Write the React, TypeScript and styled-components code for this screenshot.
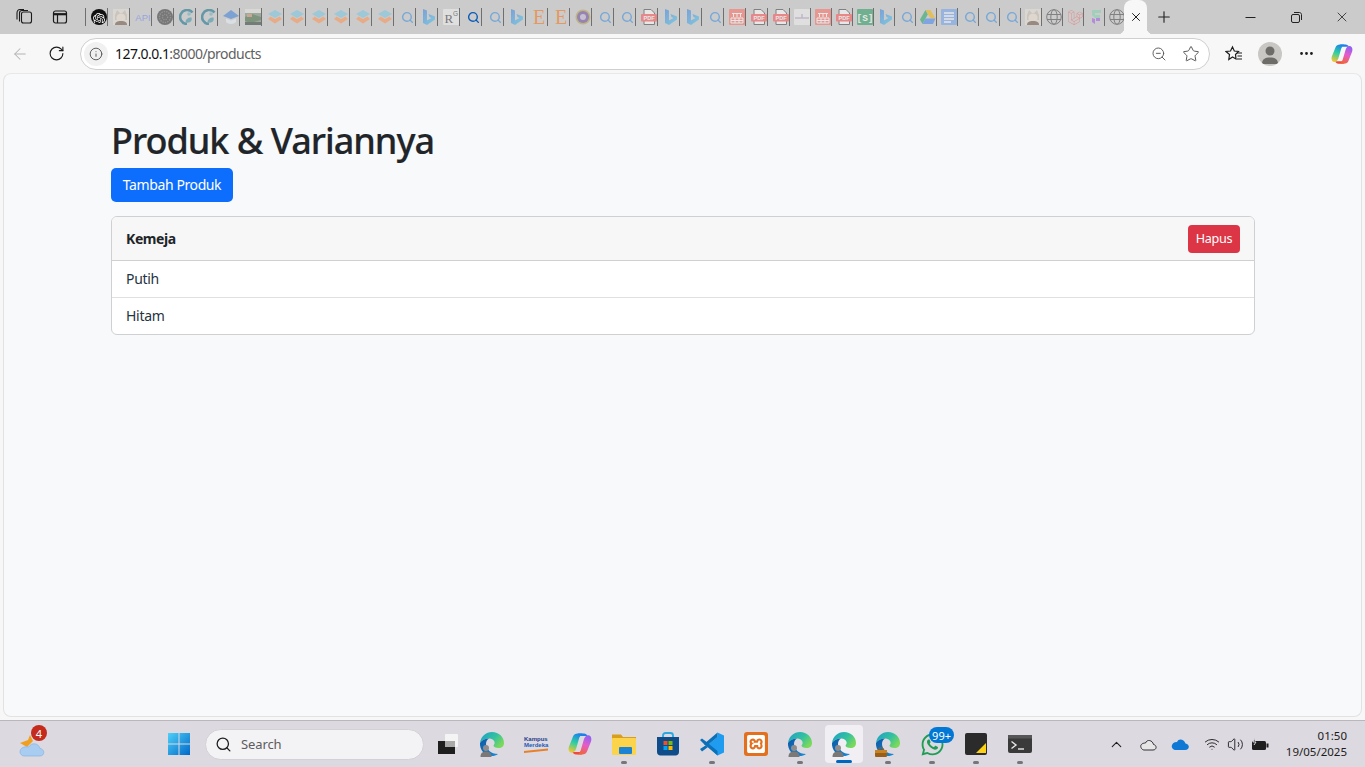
import React from 'react';
import styled, { createGlobalStyle } from 'styled-components';
import { ArrowLeft, ChevronUp, Info, MoreHorizontal, Plus, RotateCw, Search, Star, Volume2, Wifi, X, ZoomOut } from 'lucide-react';
import { SiLaravel, SiOpenai, SiXampp } from 'react-icons/si';
import { FaWhatsapp } from 'react-icons/fa';

const uiFont = '"Noto Sans", "Open Sans", "Liberation Sans", sans-serif';

const GlobalStyle = createGlobalStyle`
  html, body {
    margin: 0;
    padding: 0;
    height: 100%;
    overflow: hidden;
    font-family: ${uiFont};
  }
  * {
    box-sizing: border-box;
  }
`;

const Screen = styled.div`
  width: 1365px;
  height: 767px;
  display: flex;
  flex-direction: column;
  background: #f7f7f7;
`;

// Browser tab strip
const TabStrip = styled.div`
  height: 34px;
  flex: none;
  display: flex;
  align-items: center;
  background: #cbcbcb;
  padding-left: 6px;
`;

const StripButton = styled.div`
  width: 36px;
  height: 32px;
  flex: none;
  display: flex;
  align-items: center;
  justify-content: center;
  color: #1b1b1b;
`;

const TabGroup = styled.div`
  display: flex;
  align-items: center;
  margin-left: 7px;
  width: 1039px;
  flex: none;
`;

const TabCell = styled.div<{ $wide: boolean }>`
  width: ${p => (p.$wide ? 22 : 21)}px;
  height: 18px;
  flex: none;
  display: flex;
  align-items: center;
  justify-content: flex-end;
  border-left: 1px solid #6f6f6f;
`;

const IconFace = styled.div<{ $pale: boolean }>`
  width: 16px;
  height: 16px;
  display: flex;
  align-items: center;
  justify-content: center;
  opacity: ${p => (p.$pale ? 0.55 : 1)};
  line-height: 1;
`;

const SerifLetter = styled.span`
  font-family: "Liberation Serif", serif;
  font-size: 20px;
  line-height: 16px;
  color: #fa720c;
`;

const ActiveTab = styled.div`
  position: relative;
  width: 23px;
  height: 34px;
  flex: none;
  display: flex;
  align-items: center;
  justify-content: center;
  background: #f7f7f7;
  border-radius: 8px 8px 0 0;
  color: #111;
  &::before,
  &::after {
    content: '';
    position: absolute;
    bottom: 0;
    width: 6px;
    height: 6px;
  }
  &::before {
    left: -6px;
    background: radial-gradient(circle at 0 0, #cbcbcb 6px, #f7f7f7 6.5px);
  }
  &::after {
    right: -6px;
    background: radial-gradient(circle at 100% 0, #cbcbcb 6px, #f7f7f7 6.5px);
  }
`;

const NewTab = styled.div`
  width: 34px;
  flex: none;
  display: flex;
  justify-content: center;
  color: #222;
`;

const WindowControls = styled.div`
  margin-left: auto;
  display: flex;
  align-items: center;
  color: #222;
`;

const WindowButton = styled.div`
  width: 46px;
  height: 32px;
  display: flex;
  align-items: center;
  justify-content: center;
`;

// Address bar row
const Toolbar = styled.div`
  height: 39px;
  flex: none;
  display: flex;
  align-items: center;
  padding: 0 2px;
  background: #f7f7f7;
`;

const ToolButton = styled.div<{ $faded?: boolean }>`
  width: 36px;
  height: 32px;
  flex: none;
  display: flex;
  align-items: center;
  justify-content: center;
  color: ${p => (p.$faded ? '#b4b4b4' : '#1c1c1c')};
`;

const AddressBar = styled.div`
  width: 1130px;
  height: 32px;
  margin: 0 6px;
  flex: none;
  display: flex;
  align-items: center;
  background: #fff;
  border: 1px solid #cfcfcf;
  border-radius: 16px;
  padding-left: 3px;
  padding-right: 7px;
`;

const InfoChip = styled.div`
  width: 24px;
  height: 24px;
  flex: none;
  border-radius: 50%;
  background: #f1f1f1;
  display: flex;
  align-items: center;
  justify-content: center;
  color: #555;
`;

const UrlText = styled.div`
  margin-left: 7px;
  font-size: 14px;
  letter-spacing: -0.55px;
  color: #5f5f5f;
  b {
    font-weight: 400;
    color: #111;
  }
`;

const AddressActions = styled.div`
  margin-left: auto;
  display: flex;
  align-items: center;
  gap: 9px;
  color: #555;
`;

const AddressAction = styled.div`
  width: 23px;
  display: flex;
  justify-content: center;
`;

const ProfileIcon = styled.div`
  width: 24px;
  height: 24px;
  border-radius: 50%;
  background: #c9c7c4;
  overflow: hidden;
`;

// The page itself
const PageFrame = styled.div`
  height: 644px;
  flex: none;
  margin: 0 3px 0 3px;
  background: #f8f9fa;
  border: 1px solid #e2e2e2;
  border-top-color: #e8e8e8;
  border-radius: 8px;
  padding: 44px 106px 0 107px;
`;

const Title = styled.h1`
  margin: 0;
  height: 50px;
  font-size: 36px;
  line-height: 45px;
  font-weight: 500;
  color: #212529;
  letter-spacing: -1px;
  -webkit-text-stroke: 0.2px #212529;
`;

const PrimaryButton = styled.div`
  width: 122px;
  height: 34px;
  padding-bottom: 2px;
  display: flex;
  align-items: center;
  justify-content: center;
  background: #0d6efd;
  color: #fff;
  font-size: 14px;
  letter-spacing: -0.4px;
  border-radius: 5px;
`;

const Card = styled.div`
  margin-top: 14px;
  background: #fff;
  border: 1px solid #cfd0d1;
  border-radius: 6px;
  overflow: hidden;
`;

const CardHeader = styled.div`
  height: 44px;
  display: flex;
  align-items: center;
  justify-content: space-between;
  padding: 0 14px;
  background: #f7f7f7;
  border-bottom: 1px solid #cfd0d1;
  font-size: 14px;
  font-weight: 700;
  letter-spacing: -0.4px;
  color: #212529;
`;

const DangerButton = styled.div`
  width: 52px;
  height: 28px;
  padding-bottom: 1px;
  display: flex;
  align-items: center;
  justify-content: center;
  background: #dc3545;
  color: #fff;
  font-size: 12.6px;
  font-weight: 400;
  letter-spacing: -0.25px;
  border-radius: 4px;
`;

const VariantRow = styled.div<{ $last?: boolean }>`
  height: ${p => (p.$last ? 36 : 37)}px;
  padding: 0 14px 2px;
  display: flex;
  align-items: center;
  font-size: 14px;
  letter-spacing: -0.3px;
  color: #263340;
  border-bottom: ${p => (p.$last ? 'none' : '1px solid #dfe0e1')};
`;

// Windows taskbar
const Taskbar = styled.div`
  margin-top: 3px;
  height: 47px;
  flex: none;
  display: flex;
  align-items: center;
  background: #dcd9e0;
  border-top: 1px solid #b9b7bb;
`;

const WeatherSlot = styled.div`
  width: 157px;
  flex: none;
  padding-left: 19px;
  display: flex;
  align-items: center;
`;

const WeatherIcon = styled.div`
  position: relative;
  width: 26px;
  height: 26px;
`;

const Badge = styled.span<{ $tone: string; $top: number; $right: number }>`
  position: absolute;
  display: flex;
  align-items: center;
  justify-content: center;
  color: #fff;
  background: ${p => p.$tone};
  font-size: 11px;
  line-height: 1;
  border-radius: 8px;
  height: 16px;
  min-width: 16px;
  padding: 0 3px;
  top: ${p => p.$top}px;
  right: ${p => p.$right}px;
`;

const TaskSlot = styled.div<{ $active?: boolean }>`
  position: relative;
  height: ${p => (p.$active ? '38px' : '40px')};
  flex: none;
  display: flex;
  align-items: center;
  justify-content: center;
  border-radius: 4px;
  background: ${p => (p.$active ? '#f1eff3' : 'transparent')};
  width: ${p => (p.$active ? '38px' : '44px')};
  margin: ${p => (p.$active ? '0 3px' : '0')};
`;

const RunDot = styled.span<{ $active?: boolean }>`
  position: absolute;
  bottom: 0;
  left: 50%;
  transform: translateX(-50%);
  width: ${p => (p.$active ? '16px' : '6px')};
  height: 3px;
  border-radius: 2px;
  background: ${p => (p.$active ? '#0067c0' : '#77757a')};
`;

const SearchBox = styled.div`
  width: 219px;
  height: 31px;
  margin: 0 2px 0 4px;
  flex: none;
  display: flex;
  align-items: center;
  gap: 9px;
  padding-left: 9px;
  border-radius: 16px;
  background: #f3f2f4;
  border: 1px solid #d3d1d5;
  color: #1c1c1c;
  span {
    font-size: 13px;
    letter-spacing: -0.1px;
    color: #5c5c5c;
  }
`;

const Tray = styled.div`
  margin-left: auto;
  display: flex;
  align-items: center;
  padding-right: 18px;
  color: #1f1f1f;
`;

const TrayIcon = styled.div<{ $w: number }>`
  width: ${p => p.$w}px;
  flex: none;
  display: flex;
  justify-content: center;
  align-items: center;
`;

const Clock = styled.div`
  width: 73px;
  text-align: right;
  font-size: 11.5px;
  line-height: 16px;
  color: #1c1c1c;
`;

const pageIcon = (color: string, body: React.ReactNode) => (
  <svg width="16" height="16" viewBox="0 0 16 16">
    <rect x="0" y="0" width="16" height="16" rx="1" fill={color} />
    {body}
  </svg>
);

type FaviconKind =
  | 'openai' | 'anime' | 'api' | 'mesh' | 'teal' | 'house' | 'map' | 'stack' | 'search' | 'searchDark'
  | 'bing' | 'rg' | 'e' | 'seal' | 'pdf' | 'table' | 'pale' | 'scribd' | 'drive' | 'docs' | 'globe'
  | 'laravel' | 'filament';

const Favicon: React.FC<{ kind: FaviconKind }> = ({ kind }) => {
  switch (kind) {
    case 'openai':
      return (
        <svg width="16" height="16" viewBox="0 0 16 16">
          <circle cx="8" cy="8" r="8" fill="#111" />
          <foreignObject x="2" y="2" width="12" height="12">
            <SiOpenai size={12} color="#fff" />
          </foreignObject>
        </svg>
      );
    case 'anime':
      return (
        <svg width="16" height="16" viewBox="0 0 16 16">
          <rect width="16" height="16" fill="#e8e2da" />
          <path d="M2 6 4 1l3 3h2l3-3 2 5v5H2Z" fill="#cbbfb2" />
          <circle cx="8" cy="9" r="4.6" fill="#efe2d4" />
          <path d="M2 16c0-3 2-4 6-4s6 1 6 4Z" fill="#6f5546" />
        </svg>
      );
    case 'api':
      return (
        <svg width="16" height="16" viewBox="0 0 16 16">
          <text x="0.3" y="12" fontSize="9.500" fontWeight="400" fontFamily="Liberation Sans, sans-serif" fill="#6f86f0">API</text>
        </svg>
      );
    case 'mesh':
      return (
        <svg width="16" height="16" viewBox="0 0 16 16">
          <circle cx="8" cy="8" r="8" fill="#333" />
          <circle cx="8" cy="8" r="5.5" fill="none" stroke="#666" strokeWidth="1.4" strokeDasharray="1.4 1" />
          <circle cx="8" cy="8" r="2.6" fill="none" stroke="#666" strokeWidth="1.4" strokeDasharray="1.2 1" />
        </svg>
      );
    case 'teal':
      return (
        <svg width="16" height="16" viewBox="0 0 16 16">
          <path d="M13.5 3.5A7 7 0 1 0 8 15" fill="none" stroke="#12708a" strokeWidth="2.6" />
          <path d="M6.500 13.500c0-3 2-5 6-5 1 3-1 6-6 5Z" fill="#3a93a8" />
          <circle cx="10" cy="5" r="1.8" fill="#6bb0c0" />
        </svg>
      );
    case 'house':
      return (
        <svg width="16" height="16" viewBox="0 0 16 16">
          <path d="M8 1 16 7 8 10 0 7Z" fill="#3f7fd6" />
          <path d="M3 9.500 8 11.500l5-2V13c-2 2.500-8 2.500-10 0Z" fill="#e8f0fa" />
        </svg>
      );
    case 'map':
      return (
        <svg width="16" height="16" viewBox="0 0 16 16">
          <rect width="16" height="16" fill="#7b8f78" />
          <rect y="0" width="16" height="4" fill="#e4e4de" />
          <path d="M0 8 7 5l9 3v3L6 14 0 12Z" fill="#42683f" />
          <rect x="2" y="5" width="5" height="3" fill="#c98a6a" />
          <rect y="13" width="16" height="3" fill="#2d3d33" />
        </svg>
      );
    case 'stack':
      return (
        <svg width="16" height="16" viewBox="0 0 16 16">
          <path d="M8 1 15 5 8 9 1 5Z" fill="#76c6e3" />
          <path d="M3.500 7.500 8 10l4.500-2.500L15 10l-7 4.500L1 10Z" fill="#ff9450" />
        </svg>
      );
    case 'search':
    case 'searchDark':
      return <Search size={13} strokeWidth={2.6} color={kind === 'search' ? '#358ce3' : '#0a5cb8'} />;
    case 'bing':
      return (
        <svg width="16" height="18" viewBox="0 0 16 18">
          <defs>
            <linearGradient id="bingFill" x1="0" y1="0" x2="1" y2="1">
              <stop offset="0" stopColor="#3b7fe0" />
              <stop offset="1" stopColor="#45c8ee" />
            </linearGradient>
          </defs>
          <path d="M2 1 6 2.500V12.500L10.500 10 8.500 9 7.500 6 14 8.500V11.500L6 17 2 15Z" fill="url(#bingFill)" />
        </svg>
      );
    case 'rg':
      return pageIcon('#f0f0f0', (
        <>
          <text x="1.500" y="14" fontSize="13" fontFamily="Liberation Serif, serif" fill="#333">R</text>
          <text x="10" y="7" fontSize="6.500" fontFamily="Liberation Sans, sans-serif" fill="#333">G</text>
        </>
      ));
    case 'e':
      return <SerifLetter>E</SerifLetter>;
    case 'seal':
      return (
        <svg width="16" height="16" viewBox="0 0 16 16">
          <circle cx="8" cy="8" r="7.500" fill="#b7a24a" />
          <circle cx="8" cy="8" r="6" fill="#6a4a9f" />
          <circle cx="8" cy="8" r="3" fill="#c9b6d8" />
        </svg>
      );
    case 'pdf':
      return (
        <svg width="16" height="16" viewBox="0 0 16 16">
          <path d="M3 .5h7L13.500 4v11.500H3Z" fill="#fff" stroke="#444" strokeWidth="1" />
          <rect x="0" y="5" width="16" height="7.500" rx="1" fill="#ff5252" />
          <text x="8" y="11" textAnchor="middle" fontSize="5.600" fontWeight="700" fontFamily="Liberation Sans, sans-serif" fill="#fff">PDF</text>
        </svg>
      );
    case 'table':
      return pageIcon('#ff6e60', (
        <path d="M3 4.500h10M4.500 4.500V8M8 4.500V8M11.500 4.500V8M2 9h12v5H2Z M2 11.500h12M6 9v5M10 9v5" stroke="#fff" strokeWidth="1" fill="none" />
      ));
    case 'pale':
      return pageIcon('#f2f0f2', <path d="M1 9h14M8 5v4" stroke="#b6a6c6" strokeWidth="1.500" />);
    case 'scribd':
      return pageIcon('#269a60', <text x="8" y="12" textAnchor="middle" fontSize="9.500" fontWeight="700" fontFamily="Liberation Mono, monospace" fill="#fff">[S]</text>);
    case 'drive':
      return (
        <svg width="16" height="15" viewBox="0 0 16 15">
          <path d="M5.500 0h5l5 8.500h-5Z" fill="#f6b704" />
          <path d="M5.500 0 0 9.500 2.500 14l5.300-9.500Z" fill="#1fa463" />
          <path d="M2.500 14h10.500l2.500-5.500H5.500Z" fill="#4285f4" />
        </svg>
      );
    case 'docs':
      return pageIcon('#6ea2f1', <path d="M3 4h10M3 7h10M3 10h10M3 13h7" stroke="#fff" strokeWidth="1.300" />);
    case 'globe':
      return (
        <svg width="16" height="16" viewBox="0 0 16 16" fill="none" stroke="#444" strokeWidth="1">
          <circle cx="8" cy="8" r="7.300" />
          <ellipse cx="8" cy="8" rx="3.200" ry="7.300" />
          <path d="M1 5.500h14M1 10.500h14" />
        </svg>
      );
    case 'laravel':
      return <SiLaravel size={15} color="#f0605a" />;
    case 'filament':
      return (
        <svg width="14" height="16" viewBox="0 0 14 16">
          <path d="M3 1h9v3H6v2h5v3H6L3 6Z" fill="#7fd3b0" />
          <path d="M3 9l3 1v5L3 13Z M7 9h4v3H7Z" fill="#9b59e6" />
        </svg>
      );
  }
};

const tabKinds: FaviconKind[] = [
  'openai', 'anime', 'api', 'mesh', 'teal', 'teal', 'house', 'map',
  'stack', 'stack', 'stack', 'stack', 'stack', 'stack', 'search', 'bing',
  'rg', 'searchDark', 'search', 'bing', 'e', 'e', 'seal', 'search',
  'search', 'pdf', 'bing', 'bing', 'search', 'table', 'pdf', 'pdf',
  'pale', 'table', 'pdf', 'scribd', 'bing', 'search', 'drive', 'docs',
  'search', 'search', 'search', 'anime', 'globe', 'laravel', 'filament', 'globe',
];

const solidKinds: FaviconKind[] = ['openai', 'searchDark'];

const EdgeIcon: React.FC<{ badge?: 'person' | 'work'; id: string }> = ({ badge, id }) => (
  <svg width="26" height="26" viewBox="0 0 26 26">
    <defs>
      <linearGradient id={`${id}a`} x1="0" y1="0" x2="1" y2="0.600">
        <stop offset="0" stopColor="#1a9fc9" />
        <stop offset="0.600" stopColor="#35c1a0" />
        <stop offset="1" stopColor="#7ad95a" />
      </linearGradient>
      <linearGradient id={`${id}b`} x1="0" y1="0" x2="1" y2="1">
        <stop offset="0" stopColor="#0c59a4" />
        <stop offset="1" stopColor="#1b8ad6" />
      </linearGradient>
    </defs>
    <path d="M1 12C2 5 7 1 13 1c7 0 12 5 12 11 0 3-2 5-5.500 5-3 0-5-1-5-2.500 3-3 0-7-4-7C6 7.500 3 9 1 12Z" fill={`url(#${id}a)`} />
    <path d="M1 12c2-3 5-4.500 9-4.500-2 1-3 3-3 5.500 0 5 5 10 12 10-2 1.500-4 2-6 2C6 25 .5 19 1 12Z" fill={`url(#${id}b)`} />
    {badge === 'person' && (
      <g>
        <circle cx="7" cy="17" r="3" fill="#8f8d8c" />
        <path d="M1.500 26c0-4 2-5.500 5.500-5.500s5.500 1.500 5.500 5.500Z" fill="#7b7977" />
      </g>
    )}
    {badge === 'work' && (
      <g>
        <rect x="0" y="19" width="12" height="7" rx="1" fill="#9a5f16" />
        <rect x="0" y="19" width="12" height="3" fill="#c68223" />
        <path d="M4 19v-2h4v2" fill="none" stroke="#9a5f16" strokeWidth="1" />
      </g>
    )}
  </svg>
);

const ribbon = 'M10 1.500h5c-2 .5-3 2-3.500 3.500L8 17c-.7 2-2.200 4-4.500 3.800C1 20.500 0 17.500 1 14.500L5 4.500C5.700 2.500 7.500 1.500 10 1.500Z';

const CopilotIcon: React.FC<{ size: number; id: string }> = ({ size, id }) => (
  <svg width={size} height={size} viewBox="0 0 24 24">
    <defs>
      <linearGradient id={`${id}a`} x1="0.600" y1="0" x2="0.300" y2="1">
        <stop offset="0" stopColor="#1a84ec" />
        <stop offset="0.500" stopColor="#2fd0a0" />
        <stop offset="1" stopColor="#f5c52f" />
      </linearGradient>
      <linearGradient id={`${id}b`} x1="0.600" y1="0" x2="0.300" y2="1">
        <stop offset="0" stopColor="#f2653a" />
        <stop offset="0.500" stopColor="#e45ccc" />
        <stop offset="1" stopColor="#8b62f2" />
      </linearGradient>
    </defs>
    <path d="M10 1.500h6c1.500 0 3 1 3.500 2.500H13c-1 0-1.500.5-2 1.500Z" fill="#1e7fe8" />
    <path d="M14 22.500H8c-1.500 0-3-1-3.500-2.500H11c1 0 1.500-.5 2-1.500Z" fill="#ef4a3a" />
    <path d={ribbon} fill={`url(#${id}a)`} />
    <path d={ribbon} fill={`url(#${id}b)`} transform="rotate(180 12 12)" />
  </svg>
);

const KampusLogo = () => (
  <svg width="26" height="20" viewBox="0 0 26 20">
    <text x="1" y="7" fontSize="6" fontWeight="700" fontFamily="Liberation Sans, sans-serif" fill="#27408b">Kampus</text>
    <text x="1" y="13" fontSize="6" fontWeight="700" fontFamily="Liberation Sans, sans-serif" fill="#1f5bb5">Merdeka</text>
    <path d="M1 17 25 14.500v2L1 19Z" fill="#e8802a" />
  </svg>
);

const StartLogo = () => (
  <svg width="24" height="24" viewBox="0 0 24 24">
    <defs>
      <linearGradient id="startFill" x1="0" y1="0" x2="1" y2="1">
        <stop offset="0" stopColor="#4fd0f8" />
        <stop offset="1" stopColor="#0068c8" />
      </linearGradient>
    </defs>
    <path d="M1 1h10.500v10.500H1ZM12.500 1H23v10.500H12.500ZM1 12.500h10.500V23H1ZM12.500 12.500H23V23H12.500Z" fill="url(#startFill)" />
  </svg>
);

const taskItems: { key: string; node: React.ReactNode; running?: boolean; active?: boolean; badge?: string }[] = [
  {
    key: 'widgets',
    node: (
      <svg width="22" height="22" viewBox="0 0 22 22">
        <rect x="1" y="8" width="17" height="13" fill="#1e1e1e" />
        <rect x="8" y="1" width="13" height="13" rx="1" fill="#f4f4f4" />
        <rect x="8" y="8" width="10" height="6" fill="#a9a9a9" />
      </svg>
    ),
  },
  { key: 'edge1', node: <EdgeIcon id="e1" badge="person" /> },
  { key: 'kampus', node: <KampusLogo /> },
  { key: 'copilot', node: <CopilotIcon size={24} id="cpTask" /> },
  {
    key: 'files',
    running: true,
    node: (
      <svg width="24" height="22" viewBox="0 0 24 22">
        <path d="M0 1.500h9l2 2.500h13v3H0Z" fill="#d99e1c" />
        <rect y="5" width="24" height="17" rx="1" fill="#fbd44c" />
        <rect x="7" y="14" width="13" height="7" rx="1" fill="#1b84d4" />
      </svg>
    ),
  },
  {
    key: 'store',
    node: (
      <svg width="24" height="24" viewBox="0 0 24 24">
        <path d="M7 6V3.500C7 2 8 1 9.500 1h5C16 1 17 2 17 3.500V6" fill="none" stroke="#2aa8e0" strokeWidth="1.800" />
        <path d="M1 5h22v15c0 2-1.500 3.500-3.500 3.500h-15C2.500 23.500 1 22 1 20Z" fill="#0f4c8a" />
        <rect x="7.500" y="9" width="4" height="4" fill="#f25022" />
        <rect x="12.500" y="9" width="4" height="4" fill="#7fba00" />
        <rect x="7.500" y="14" width="4" height="4" fill="#00a4ef" />
        <rect x="12.500" y="14" width="4" height="4" fill="#ffb900" />
      </svg>
    ),
  },
  {
    key: 'vscode',
    running: true,
    node: (
      <svg width="24" height="24" viewBox="0 0 24 24">
        <path d="M17.500 0.500 24 3.500v17l-6.500 3L7 13.500l10.500-8.500V.5Z" fill="#1f9cf0" />
        <path d="M17.500 5 9 12l8.500 7v4.500L4 12 17.500 .5Z" fill="#0a70b8" />
        <path d="M0 8l2-1.500 6 4.500-2.500 2.500Z M5.500 13.500 8 15l-6 4.500L0 17Z" fill="#0a70b8" />
      </svg>
    ),
  },
  {
    key: 'xampp',
    node: (
      <svg width="24" height="24" viewBox="0 0 24 24">
        <rect width="24" height="24" rx="3" fill="#e2701f" />
        <foreignObject x="3" y="3" width="18" height="18">
          <SiXampp size={18} color="#fff" />
        </foreignObject>
      </svg>
    ),
  },
  { key: 'edge2', node: <EdgeIcon id="e2" badge="person" />, running: true },
  { key: 'edge3', node: <EdgeIcon id="e3" badge="person" />, running: true, active: true },
  { key: 'edge4', node: <EdgeIcon id="e4" badge="work" />, running: true },
  { key: 'whatsapp', node: <FaWhatsapp size={25} color="#1f9d55" />, running: true, badge: '99+' },
  {
    key: 'notes',
    running: true,
    node: (
      <svg width="22" height="22" viewBox="0 0 22 22">
        <rect width="22" height="22" rx="2" fill="#2b2b2b" />
        <path d="M11 20 21 10v10Z" fill="#fcd116" />
      </svg>
    ),
  },
  {
    key: 'terminal',
    running: true,
    node: (
      <svg width="24" height="18" viewBox="0 0 24 18">
        <rect width="24" height="18" rx="2" fill="#3a3a3a" />
        <rect width="24" height="3.500" fill="#565656" />
        <path d="M3.500 6.500 8 10l-4.500 3.500" fill="none" stroke="#e8e8e8" strokeWidth="1.400" />
        <path d="M10 14h6" stroke="#e8e8e8" strokeWidth="1.400" />
      </svg>
    ),
  },
];

const App: React.FC = () => {
  return (
    <Screen>
      <GlobalStyle />
      <TabStrip>
        <StripButton>
          <svg width="18" height="18" viewBox="0 0 18 18" fill="none" stroke="#1b1b1b" strokeWidth="1.100">
            <rect x="6.500" y="4" width="10" height="11" rx="2" />
            <path d="M4.500 13.500V5c0-1.500 1-2.500 2.500-2.500h6M2 11.500V5C2 3 3 1.500 5 1.500h4" />
          </svg>
        </StripButton>
        <StripButton>
          <svg width="16" height="16" viewBox="0 0 16 16" fill="none" stroke="#1b1b1b" strokeWidth="1.200">
            <rect x="1.500" y="2" width="13" height="12" rx="2" />
            <path d="M1.500 5.200h13" strokeWidth="2.200" />
            <path d="M5.500 5v9" />
          </svg>
        </StripButton>
        <TabGroup>
          {tabKinds.map((kind, i) => (
            <TabCell key={i} $wide={i < 32}>
              <IconFace $pale={!solidKinds.includes(kind)}>
                <Favicon kind={kind} />
              </IconFace>
            </TabCell>
          ))}
        </TabGroup>
        <ActiveTab>
          <X size={14} strokeWidth={1.6} />
        </ActiveTab>
        <NewTab>
          <Plus size={18} strokeWidth={1.5} />
        </NewTab>
        <WindowControls>
          <WindowButton>
            <svg width="11" height="11" viewBox="0 0 11 11"><path d="M.5 5.500h10" stroke="#222" /></svg>
          </WindowButton>
          <WindowButton>
            <svg width="11" height="11" viewBox="0 0 11 11" fill="none" stroke="#222">
              <rect x=".5" y="2.500" width="8" height="8" rx="1.500" />
              <path d="M3 .5h5.500c1 0 2 1 2 2V8" />
            </svg>
          </WindowButton>
          <WindowButton>
            <X size={16} strokeWidth={1.2} />
          </WindowButton>
        </WindowControls>
      </TabStrip>

      <Toolbar>
        <ToolButton $faded>
          <ArrowLeft size={18} strokeWidth={1.4} />
        </ToolButton>
        <ToolButton>
          <RotateCw size={17} strokeWidth={1.6} />
        </ToolButton>
        <AddressBar>
          <InfoChip>
            <Info size={14} strokeWidth={1.6} />
          </InfoChip>
          <UrlText>
            <b>127.0.0.1</b>:8000/products
          </UrlText>
          <AddressActions>
            <AddressAction>
              <ZoomOut size={16} strokeWidth={1.4} />
            </AddressAction>
            <AddressAction>
              <Star size={18} strokeWidth={1.3} />
            </AddressAction>
          </AddressActions>
        </AddressBar>
        <ToolButton>
          <svg width="18" height="18" viewBox="0 0 18 18" fill="none" stroke="#1c1c1c" strokeWidth="1.200">
            <path d="M7.500 2 9.300 6 13.500 6.500 10.500 9.500 11 14 7.500 12 3.800 14.500 4.500 9.500 1 6.500 5.500 6Z" />
            <path d="M12 8h5M12.500 11h4.500M12 14h5" />
          </svg>
        </ToolButton>
        <ToolButton>
          <ProfileIcon>
            <svg width="24" height="24" viewBox="0 0 24 24">
              <circle cx="12" cy="9" r="4.500" fill="#6e6c69" />
              <path d="M4 22c0-5 3-6.500 8-6.500s8 1.500 8 6.500Z" fill="#6e6c69" />
            </svg>
          </ProfileIcon>
        </ToolButton>
        <ToolButton>
          <MoreHorizontal size={17} strokeWidth={2} />
        </ToolButton>
        <ToolButton>
          <CopilotIcon size={22} id="cpBar" />
        </ToolButton>
      </Toolbar>

      <PageFrame>
        <Title>Produk &amp; Variannya</Title>
        <PrimaryButton>Tambah Produk</PrimaryButton>
        <Card>
          <CardHeader>
            Kemeja
            <DangerButton>Hapus</DangerButton>
          </CardHeader>
          <VariantRow>Putih</VariantRow>
          <VariantRow $last>Hitam</VariantRow>
        </Card>
      </PageFrame>

      <Taskbar>
        <WeatherSlot>
          <WeatherIcon>
            <svg width="26" height="26" viewBox="0 0 26 26">
              <path d="M1 12 9 9l2-5 3 6-6 6Z" fill="#f0a020" />
              <path d="M5 25h16c5 0 5-7 0-7.500C20 12 12 11 10 16c-5-1-9 1-9 5 0 2 2 4 4 4Z" fill="#a9cdf0" stroke="#7eaee0" strokeWidth=".6" />
            </svg>
            <Badge $tone="#c42b1c" $top={-6} $right={-2}>4</Badge>
          </WeatherIcon>
        </WeatherSlot>
        <TaskSlot>
          <StartLogo />
        </TaskSlot>
        <SearchBox>
          <Search size={17} strokeWidth={1.8} />
          <span>Search</span>
        </SearchBox>
        {taskItems.map(item => (
          <TaskSlot key={item.key} $active={item.active}>
            {item.node}
            {item.badge && <Badge $tone="#0078d4" $top={3} $right={0}>{item.badge}</Badge>}
            {item.running && <RunDot $active={item.active} />}
          </TaskSlot>
        ))}
        <Tray>
          <TrayIcon $w={40}>
            <ChevronUp size={17} strokeWidth={1.6} />
          </TrayIcon>
          <TrayIcon $w={24}>
            <svg width="17" height="13" viewBox="0 0 17 13">
              <path d="M4 12h9c4 0 4-5 .5-5.500C12.500 2 7 1 5.500 5 2 5 0 7 1 9.500 1.500 11 3 12 4 12Z" fill="#e6e6e6" stroke="#333" strokeWidth="1" />
            </svg>
          </TrayIcon>
          <TrayIcon $w={40}>
            <svg width="18" height="12" viewBox="0 0 18 12">
              <path d="M4 12h10c5 0 5-6 .5-6.500C13 1 7.500 0 6 4 2 4 0 7 1 9.500 1.500 11 3 12 4 12Z" fill="#0f78d4" />
            </svg>
          </TrayIcon>
          <TrayIcon $w={24}>
            <Wifi size={16} strokeWidth={1.4} />
          </TrayIcon>
          <TrayIcon $w={22}>
            <Volume2 size={17} strokeWidth={1.3} />
          </TrayIcon>
          <TrayIcon $w={28}>
            <svg width="18" height="13" viewBox="0 0 18 13">
              <rect x="1" y="3" width="14" height="9" rx="1.500" fill="#1f1f1f" />
              <rect x="15.500" y="5.500" width="2" height="4" fill="#1f1f1f" />
              <path d="M4 0 2 4h3L3 7" stroke="#dcd9e0" strokeWidth="1" fill="#1f1f1f" />
            </svg>
          </TrayIcon>
          <Clock>
            01:50
            <br />
            19/05/2025
          </Clock>
        </Tray>
      </Taskbar>
    </Screen>
  );
};

export default App;
